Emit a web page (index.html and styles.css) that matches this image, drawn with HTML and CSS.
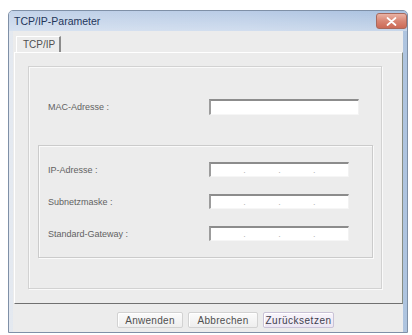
FILE: index.html
```html
<!DOCTYPE html>
<html>
<head>
    <title>TCP/IP-Parameter</title>
    <link rel="stylesheet" href="styles.css">
</head>
<body>

    <div class="window">
        <div class="titlebar">
            <span class="title">TCP/IP-Parameter</span>
            <span class="close">
                <svg width="11" height="9" viewBox="0 0 11 9">
                    <path d="M1.5 1 L9.5 8 M9.5 1 L1.5 8" stroke="#ffffff" stroke-width="1.7" stroke-linecap="round"/>
                </svg>
            </span>
        </div>

        <div class="client">
            <div class="tabs">
                <div class="tab">TCP/IP</div>
            </div>

            <div class="panel">
                <div class="group outer">
                    <div class="row">
                        <label>MAC-Adresse :</label>
                        <div class="field wide"></div>
                    </div>

                    <div class="group inner">
                        <div class="row">
                            <label>IP-Adresse :</label>
                            <div class="field ip"><span>.</span><span>.</span><span>.</span></div>
                        </div>
                        <div class="row">
                            <label>Subnetzmaske :</label>
                            <div class="field ip"><span>.</span><span>.</span><span>.</span></div>
                        </div>
                        <div class="row">
                            <label>Standard-Gateway :</label>
                            <div class="field ip"><span>.</span><span>.</span><span>.</span></div>
                        </div>
                    </div>
                </div>
            </div>

            <div class="buttons">
                <button class="btn btn-apply">Anwenden</button>
                <button class="btn btn-cancel">Abbrechen</button>
                <button class="btn btn-reset">Zurücksetzen</button>
            </div>
        </div>
    </div>

</body>
</html>
```

FILE: styles.css
```css
body {
    margin: 0;
    background: #ffffff;
    font-family: 'Liberation Sans', Arial, sans-serif;
}

.window {
    box-sizing: border-box;
    width: 400px;
    height: 323px;
    margin: 10px 0 0 8px;
    border: 1px solid #7f90a7;
    border-radius: 5px 5px 0 0;
    background: linear-gradient(to right, #e4e9f0, #cbd8e8 60%, #aec4df);
}

.titlebar {
    height: 20px;
    display: flex;
    justify-content: space-between;
    align-items: flex-start;
    background: linear-gradient(to bottom, rgba(255, 255, 255, 0) 0%, rgba(255, 255, 255, 0.35) 100%),
                linear-gradient(to right, #c3d3e9, #b9cce6 60%, #aac1df);
    border-radius: 4px 4px 0 0;
}

.title {
    padding: 4px 0 0 5px;
    font-size: 10.5px;
    color: #24365a;
}

.close {
    width: 31px;
    height: 16px;
    margin-top: 2px;
    box-sizing: border-box;
    border: 1px solid #a8695c;
    border-radius: 3px;
    background: linear-gradient(to bottom, #eab3a5, #d88573 50%, #cc6a56);
    display: flex;
    justify-content: center;
    align-items: center;
}

.client {
    height: 301px;
    margin: 0 4px;
    background: #ececec;
}

.tabs {
    height: 21px;
    display: flex;
    align-items: flex-end;
    padding-left: 3px;
}

.tab {
    box-sizing: border-box;
    height: 16px;
    width: 45px;
    padding: 2px 0 0 6px;
    font-size: 10px;
    color: #505050;
    background: #ececec;
    border-top: 1px solid #ffffff;
    border-left: 1px solid #ffffff;
    border-right: 2px solid #8b8b8b;
}

.panel {
    box-sizing: border-box;
    width: 389px;
    height: 252px;
    margin-left: 1px;
    padding: 13px 20px 14px 13px;
    border-top: 1px solid #ffffff;
    border-left: 1px solid #ffffff;
    border-right: 1px solid #878d82;
    border-bottom: 1px solid #707070;
}

.group {
    box-sizing: border-box;
    border: 1px solid #d2d2d2;
    box-shadow: inset 1px 1px 0 #fafafa, 1px 1px 0 #fafafa;
}

.outer {
    height: 223px;
    padding: 32px 0 30px 19px;
}

.inner {
    height: 113px;
    margin: 30px 8px 0 -10px;
    padding: 16px 0 16px 9px;
    display: flex;
    flex-direction: column;
    gap: 17px;
    border-color: #cbcbcb;
}

.row {
    display: flex;
    align-items: center;
}

.row label {
    width: 161px;
    font-size: 9px;
    color: #626262;
}

.field {
    box-sizing: border-box;
    background: #ffffff;
    border-top: 2px solid #8c8c8c;
    border-left: 2px solid #9c9c9c;
    border-right: 1px solid #f2f2f2;
    border-bottom: 1px solid #f6f6f6;
}

.wide {
    width: 150px;
    height: 16px;
}

.ip {
    width: 140px;
    height: 15px;
    display: flex;
    justify-content: space-evenly;
    align-items: flex-end;
    font-size: 9px;
    line-height: 11px;
    color: #b5b5b5;
}

.buttons {
    height: 28px;
    display: flex;
    align-items: flex-start;
    padding: 8px 0 0 104px;
    box-sizing: border-box;
}

.btn {
    height: 16px;
    padding: 0;
    font-family: 'Liberation Sans', Arial, sans-serif;
    font-size: 10px;
    letter-spacing: 0.3px;
    color: #505050;
    background: linear-gradient(to bottom, #fbfbfb, #eeeeee);
    border: 1px solid #d2d2d2;
    border-radius: 2px;
    box-shadow: inset 1px 1px 0 #ffffff;
}

.btn-apply {
    width: 66px;
    margin-right: 5px;
}

.btn-cancel {
    width: 70px;
    margin-right: 5px;
}

.btn-reset {
    width: 71px;
    letter-spacing: 0.5px;
    color: #3e3e4e;
    background: linear-gradient(to bottom, #f8f4fb, #ece6f3);
    border-color: #c9c2d6;
}
```
